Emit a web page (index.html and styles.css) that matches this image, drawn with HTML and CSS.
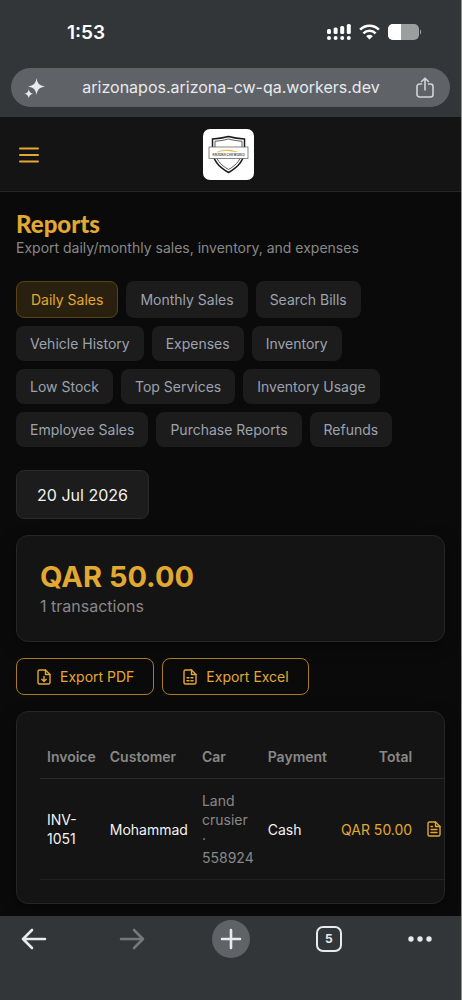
FILE: index.html
```html
<!DOCTYPE html>
<html lang="en">
<head>
    <meta charset="UTF-8">
    <meta name="viewport" content="width=device-width, initial-scale=1.0">
    <title>Reports</title>
    <link rel="stylesheet" href="styles.css">
</head>
<body>
    <div class="browser-top">
        <div class="status-bar">
            <span class="time">1:53</span>
            <div class="status-icons">
                <svg width="24" height="16" viewBox="0 0 24 16" fill="#fff">
                    <rect x="0" y="5" width="4" height="5" rx="1.5"/>
                    <rect x="6.6" y="3.6" width="4" height="6.4" rx="1.5"/>
                    <rect x="13.2" y="2" width="4" height="8" rx="1.5"/>
                    <rect x="19.8" y="0" width="4" height="10" rx="1.5"/>
                    <circle cx="2" cy="14" r="2"/>
                    <circle cx="8.6" cy="14" r="2"/>
                    <circle cx="15.2" cy="14" r="2"/>
                    <circle cx="21.8" cy="14" r="2"/>
                </svg>
                <svg width="21" height="16" viewBox="0 0 21 16" fill="none" stroke="#fff" stroke-width="2.5">
                    <path d="M1.1 5.7a13.3 13.3 0 0 1 18.8 0"/>
                    <path d="M4.4 9.4a8.6 8.6 0 0 1 12.2 0"/>
                    <path d="M10.5 15.6 7.2 12.2a4.7 4.7 0 0 1 6.6 0z" fill="#fff" stroke="none"/>
                </svg>
                <svg width="34" height="16" viewBox="0 0 34 16">
                    <rect width="31" height="16" rx="5" fill="#9c9ea0"/>
                    <path d="M5 0h8v16H5a5 5 0 0 1-5-5V5a5 5 0 0 1 5-5z" fill="#fff"/>
                    <path d="M32 5.5c1.6.6 1.6 4.4 0 5z" fill="#9c9ea0"/>
                </svg>
            </div>
        </div>
        <div class="address-bar">
            <svg width="22" height="22" viewBox="0 0 22 22" fill="#e8eaed">
                <path d="M12.5 1c.9 5.6 2.7 7.4 8.500 8.500-5.800 1.100-7.600 2.900-8.500 8.500-.9-5.600-2.700-7.400-8.500-8.500 5.800-1.100 7.600-2.900 8.500-8.500z"/>
                <path d="M4.8 12.200c.5 2.900 1.500 3.900 4.400 4.500-2.900.6-3.900 1.600-4.400 4.500-.5-2.900-1.500-3.900-4.400-4.500 2.900-.6 3.900-1.600 4.400-4.500z"/>
            </svg>
            <span class="url">arizonapos.arizona-cw-qa.workers.dev</span>
            <svg width="18" height="21" viewBox="0 0 18 21" fill="none" stroke="#d3d5d8" stroke-width="1.6" stroke-linecap="round" stroke-linejoin="round">
                <path d="M5.5 7h-2A2.5 2.5 0 0 0 1 9.500v8A2.500 2.500 0 0 0 3.500 20h11a2.500 2.500 0 0 0 2.500-2.500v-8A2.500 2.500 0 0 0 14.500 7h-2"/>
                <path d="M9 13V1.200M5.600 4.500 9 1.200l3.400 3.300"/>
            </svg>
        </div>
    </div>

    <header class="app-header">
        <button class="menu-btn" aria-label="Menu">
            <svg width="20" height="16" viewBox="0 0 20 16" stroke="#e2a832" stroke-width="2" stroke-linecap="round">
                <path d="M1 1.500h18M1 8h18M1 14.500h18"/>
            </svg>
        </button>
        <svg class="logo" viewBox="0 0 51 51" aria-label="Arizona Car World">
            <rect width="51" height="51" rx="7" fill="#fff"/>
            <path d="M9.500 10Q18 9.500 25.500 7.500 33 9.500 41.500 10V21c0 10.500-7 17.500-16 22.500-9-5-16-12-16-22.500z" fill="#fff" stroke="#1b1b1b" stroke-width="1.500"/>
            <path d="M12 12.300Q19 11.800 25.500 10 32 11.800 39 12.300V21c0 9-5.500 15-13.500 19.500C17.500 36 12 30 12 21z" fill="none" stroke="#333" stroke-width=".8"/>
            <rect x="6" y="18" width="39" height="11.500" fill="#fff" stroke="#555" stroke-width=".7"/>
            <path d="M14 23.200c4-2 8-2.600 12-2.200 3 .3 5 1.200 8 1.700-3 .2-5.500-.4-8-.9-4-.7-8 .3-12 1.400z" fill="#e6b030" stroke="#e6b030" stroke-width=".4"/>
            <text x="25.500" y="27" class="logo-text">ARIZONA CAR WORLD</text>
        </svg>
    </header>

    <main class="content">
        <h1>Reports</h1>
        <p class="subtitle">Export daily/monthly sales, inventory, and expenses</p>

        <div class="tabs">
            <button class="tab active">Daily Sales</button>
            <button class="tab">Monthly Sales</button>
            <button class="tab">Search Bills</button>
            <button class="tab">Vehicle History</button>
            <button class="tab">Expenses</button>
            <button class="tab">Inventory</button>
            <button class="tab">Low Stock</button>
            <button class="tab">Top Services</button>
            <button class="tab">Inventory Usage</button>
            <button class="tab">Employee Sales</button>
            <button class="tab">Purchase Reports</button>
            <button class="tab">Refunds</button>
        </div>

        <input class="date-input" type="text" value="20 Jul 2026" aria-label="Report date">

        <section class="card summary">
            <div class="amount">QAR 50.00</div>
            <div class="count">1 transactions</div>
        </section>

        <div class="exports">
            <button class="btn-outline">
                <svg class="icon" viewBox="0 0 16 16">
                    <path d="M9.500 1H3.500A1.500 1.500 0 0 0 2 2.500v11A1.500 1.500 0 0 0 3.500 15h9a1.500 1.500 0 0 0 1.500-1.500v-8z"/>
                    <path d="M9.500 1v4.500H14M8 7.500v5M5.800 10.300 8 12.500l2.200-2.200"/>
                </svg>
                Export PDF
            </button>
            <button class="btn-outline">
                <svg class="icon" viewBox="0 0 16 16">
                    <path d="M9.500 1H3.500A1.500 1.500 0 0 0 2 2.500v11A1.500 1.500 0 0 0 3.500 15h9a1.500 1.500 0 0 0 1.500-1.500v-8z"/>
                    <path d="M9.500 1v4.500H14M5 8.800h2M9 8.800h2M5 11.800h2M9 11.800h2"/>
                </svg>
                Export Excel
            </button>
        </div>

        <section class="card table-card">
            <table>
                <thead>
                    <tr>
                        <th>Invoice</th>
                        <th>Customer</th>
                        <th>Car</th>
                        <th>Payment</th>
                        <th class="right">Total</th>
                        <th></th>
                    </tr>
                </thead>
                <tbody>
                    <tr>
                        <td>INV-1051</td>
                        <td>Mohammad</td>
                        <td class="muted">Land crusier · 558924</td>
                        <td>Cash</td>
                        <td class="right total">QAR 50.00</td>
                        <td>
                            <button class="icon-btn" aria-label="View invoice">
                                <svg class="icon" viewBox="0 0 16 16">
                                    <path d="M9.500 1H3.500A1.500 1.500 0 0 0 2 2.500v11A1.500 1.500 0 0 0 3.500 15h9a1.500 1.500 0 0 0 1.500-1.500v-8z"/>
                                    <path d="M9.500 1v4.500H14M5 5.500h1.500M5 8.500h6M5 11.500h6"/>
                                </svg>
                            </button>
                        </td>
                    </tr>
                </tbody>
            </table>
        </section>
    </main>

    <nav class="browser-nav">
        <button class="nav-btn" aria-label="Back">
            <svg width="26" height="22" viewBox="0 0 26 22" stroke="#e8eaed"><path d="M24 11H2M11 2 2 11l9 9"/></svg>
        </button>
        <button class="nav-btn" aria-label="Forward">
            <svg width="26" height="22" viewBox="0 0 26 22" stroke="#75787b"><path d="M2 11h22M15 2l9 9-9 9"/></svg>
        </button>
        <button class="nav-btn new-tab" aria-label="New tab">
            <svg width="22" height="22" viewBox="0 0 22 22" stroke="#e8eaed"><path d="M11 2v18M2 11h18"/></svg>
        </button>
        <button class="nav-btn" aria-label="Open tabs">
            <span class="tab-count">5</span>
        </button>
        <button class="nav-btn more" aria-label="More">
            <svg width="26" height="6" viewBox="0 0 26 6" fill="#e8eaed"><circle cx="3" cy="3" r="2.700"/><circle cx="12" cy="3" r="2.700"/><circle cx="21" cy="3" r="2.700"/></svg>
        </button>
    </nav>
</body>
</html>
```
FILE: styles.css
```css
* {
    margin: 0;
    padding: 0;
    box-sizing: border-box;
}

body {
    font-family: 'Inter', sans-serif;
    font-size: 14px;
    line-height: 19px;
    background: #0a0a0a;
    color: #f2f2f2;
    min-height: 100vh;
    display: flex;
    flex-direction: column;
    border-right: 1px solid #8e908e;
}

button,
input {
    font: inherit;
    color: inherit;
    background: none;
    border: none;
}

button {
    cursor: pointer;
}

svg {
    display: block;
    flex-shrink: 0;
}

/* Browser chrome */
.browser-top {
    background: #323639;
    padding: 20px 11px 10px;
}

.status-bar {
    display: flex;
    justify-content: space-between;
    align-items: center;
    height: 24px;
    margin-bottom: 24px;
    padding: 0 28px 0 56px;
}

.time {
    font-size: 19px;
    font-weight: 600;
    color: #fff;
}

.status-icons {
    display: flex;
    gap: 8px;
}

.address-bar {
    display: flex;
    align-items: center;
    justify-content: space-between;
    height: 39px;
    padding: 0 16px 0 13px;
    border-radius: 20px;
    background: #5f6368;
}

.url {
    font-size: 16px;
    color: #e8eaed;
}

/* App header */
.app-header {
    display: grid;
    grid-template-columns: 1fr auto 1fr;
    align-items: center;
    padding: 12px 24px 11px 19px;
    background: #141414;
    border-bottom: 1px solid #262626;
}

.menu-btn {
    justify-self: start;
}

.logo {
    width: 51px;
    height: 51px;
}

.logo-text {
    font-size: 3px;
    font-weight: 600;
    text-anchor: middle;
    fill: #333;
}

/* Page content */
.content {
    flex: 1;
    padding: 18px 16px 12px;
}

h1 {
    font-family: 'Lato', sans-serif;
    font-size: 24px;
    font-weight: 900;
    line-height: 28px;
    color: #e2a832;
}

.subtitle {
    color: #888;
}

.tabs {
    display: flex;
    flex-wrap: wrap;
    gap: 8px;
    margin: 24px 0 23px;
}

.tab {
    padding: 8px 14px;
    border-radius: 8px;
    background: #1c1c1c;
    color: #9ca3af;
}

.tab.active {
    background: #292010;
    border: 1px solid #584412;
    color: #e2a832;
}

.date-input {
    display: block;
    width: 133px;
    height: 49px;
    border: 1px solid #2a2a2a;
    border-radius: 8px;
    background: #1c1c1c;
    font-size: 16px;
    text-align: center;
}

.card {
    background: #141414;
    border: 1px solid #262626;
    border-radius: 12px;
    box-shadow: 0 4px 16px rgba(0, 0, 0, 0.4);
}

.summary {
    margin: 16px 0;
    padding: 23px;
}

.amount {
    font-size: 29px;
    font-weight: 700;
    line-height: 36px;
    color: #e2a832;
}

.count {
    font-size: 16px;
    line-height: 23px;
    color: #888;
}

.exports {
    display: flex;
    gap: 8px;
    margin-bottom: 16px;
}

.btn-outline {
    display: flex;
    align-items: center;
    gap: 8px;
    padding: 8px 19px;
    border: 1px solid #a87c1c;
    border-radius: 8px;
    color: #e2a832;
}

.icon {
    width: 16px;
    height: 16px;
    fill: none;
    stroke: #e2a832;
    stroke-width: 1.4;
    stroke-linecap: round;
    stroke-linejoin: round;
}

.table-card {
    padding: 23px;
    overflow: hidden;
}

table {
    width: 100%;
    border-collapse: collapse;
}

th,
td {
    padding: 12px 7px;
    text-align: left;
}

th {
    font-weight: 600;
    color: #888;
    border-bottom: 1px solid #2a2a2a;
}

td {
    border-bottom: 1px solid #222;
}

.muted {
    color: #888;
}

.right {
    text-align: right;
    white-space: nowrap;
}

.total {
    color: #e2a832;
}

.icon-btn {
    display: block;
}

/* Bottom toolbar */
.browser-nav {
    display: flex;
    justify-content: space-between;
    padding: 4px 15px 42px;
    background: #323639;
}

.nav-btn {
    display: flex;
    align-items: center;
    justify-content: center;
    width: 38px;
    height: 38px;
    border-radius: 50%;
    fill: none;
    stroke-width: 2.6;
    stroke-linecap: round;
    stroke-linejoin: round;
}

.new-tab {
    background: #5f6368;
}

.tab-count {
    width: 26px;
    height: 26px;
    border: 2px solid #e8eaed;
    border-radius: 7px;
    font-size: 12px;
    font-weight: 700;
    line-height: 22px;
    color: #e8eaed;
}

.more {
    justify-content: flex-start;
}
```
